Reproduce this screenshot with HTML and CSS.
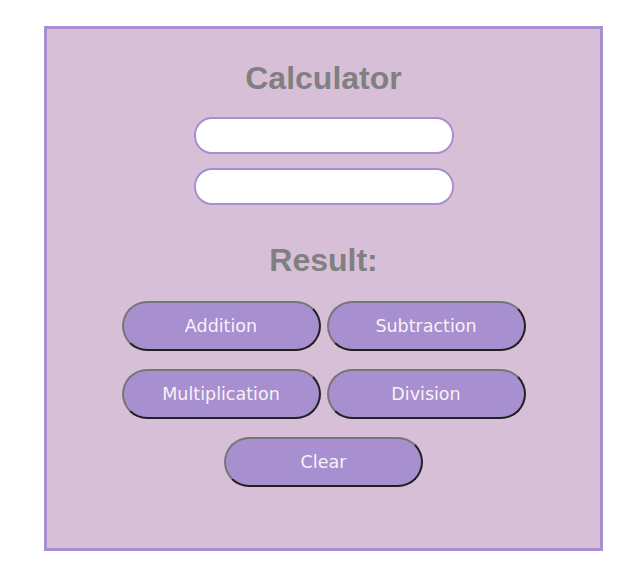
FILE: index.html
```html
<!DOCTYPE html>
<html lang="en">
<head>
    <meta charset="UTF-8">
    <meta name="viewport" content="width=device-width, initial-scale=1.0">
    <title>Calculator</title>
    <link rel="stylesheet" href="styles.css">
</head>
<body>
    <div class="calculator">
        <h1 class="title">Calculator</h1>

        <input type="text" class="num-input" id="num1">
        <input type="text" class="num-input" id="num2">

        <h2 class="result" id="result">Result:</h2>

        <div class="btn-row">
            <button class="op-btn">Addition</button>
            <button class="op-btn">Subtraction</button>
        </div>
        <div class="btn-row">
            <button class="op-btn">Multiplication</button>
            <button class="op-btn">Division</button>
        </div>
        <div class="btn-row">
            <button class="op-btn">Clear</button>
        </div>
    </div>
</body>
</html>
```

FILE: styles.css
```css
* {
    box-sizing: border-box;
}

body {
    margin: 0;
    font-family: "Liberation Sans", Arial, sans-serif;
    background: white;
}

.calculator {
    width: 559px;
    height: 525px;
    margin: 26px 0 0 44px;
    background: #d8bfd8;
    border: 3px solid #a88fd0;
    display: flex;
    flex-direction: column;
    align-items: center;
}

.title {
    margin: 33px 0 0;
    font-size: 32px;
    line-height: 32px;
    color: #808080;
}

.num-input {
    width: 260px;
    height: 37px;
    border: 2px solid #a88fd0;
    border-radius: 18px;
    background: white;
    outline: none;
}

.num-input:first-of-type {
    margin-top: 23px;
}

.num-input + .num-input {
    margin-top: 14px;
}

.result {
    margin: 39px 0 0;
    font-size: 32px;
    line-height: 32px;
    color: #808080;
}

.btn-row {
    display: flex;
    gap: 6px;
    margin-top: 25px;
}

.btn-row + .btn-row {
    margin-top: 18px;
}

.op-btn {
    width: 199px;
    height: 50px;
    background: #a88fd0;
    color: #f7f2f7;
    border: 2px outset #767676;
    border-radius: 25px;
    font-family: "DejaVu Sans", Verdana, sans-serif;
    font-size: 17.5px;
    cursor: pointer;
}
```
